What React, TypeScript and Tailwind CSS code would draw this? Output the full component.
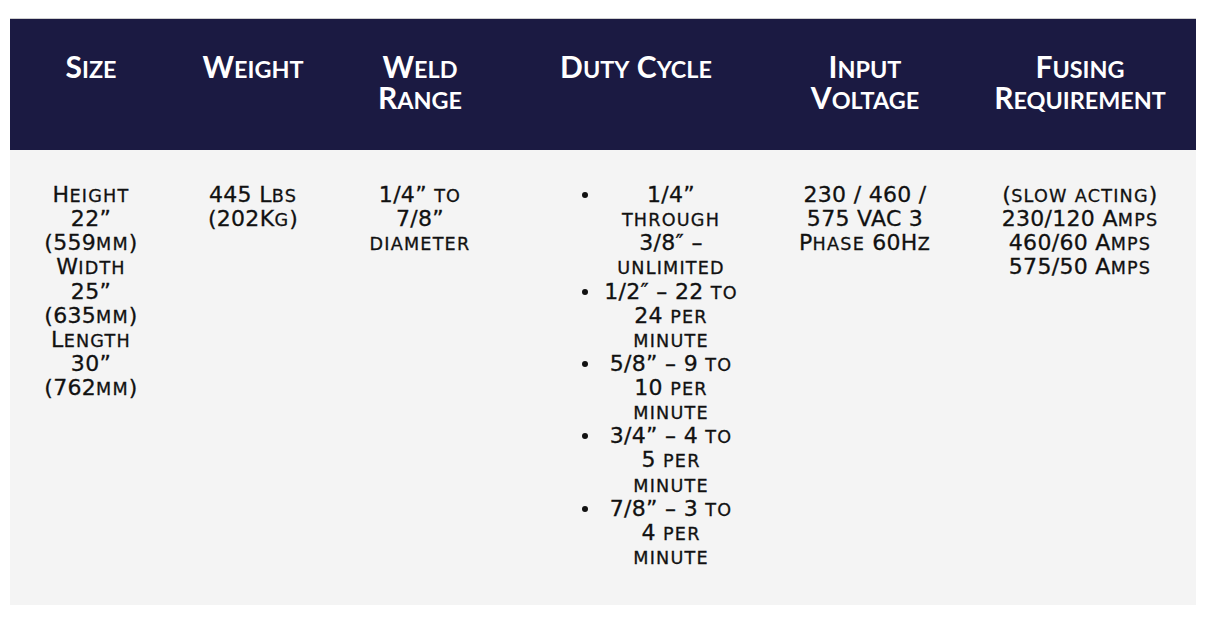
import React from "react";

function SC({ t, r, small }: { t: string; r: string; small?: string }) {
  const parts: { s: string; small: boolean }[] = [];
  for (const ch of t) {
    const sm = ch >= "a" && ch <= "z";
    const last = parts[parts.length - 1];
    if (last && last.small === sm) last.s += ch;
    else parts.push({ s: ch, small: sm });
  }
  return (
    <>
      {parts.map((p, i) =>
        p.small ? (
          <span key={i} className={"uppercase leading-[0] " + (small ?? "")} style={{ fontSize: r }}>
            {p.s}
          </span>
        ) : (
          <span key={i}>{p.s}</span>
        )
      )}
    </>
  );
}

const H = ({ t }: { t: string }) => (
  <div>
    <SC t={t} r="0.78em" />
  </div>
);

const Line = ({ t }: { t: string }) => (
  <div>
    <SC t={t} r="0.8em" small="tracking-[1.2px]" />
  </div>
);

const duty: string[][] = [
  ["1/4”", "through", "3/8″ –", "unlimited"],
  ["1/2″ – 22 to", "24 per", "minute"],
  ["5/8” – 9 to", "10 per", "minute"],
  ["3/4” – 4 to", "5 per", "minute"],
  ["7/8” – 3 to", "4 per", "minute"],
];

export default function App() {
  return (
    <div className="bg-white min-h-[629px] pt-[18px] pl-[10px]">
      <div className="w-[1186px] border-t border-[#cfcfcf]">
        <div className="grid grid-cols-[162px_162px_172px_260px_198px_232px] h-[131px] bg-[#1b1a42] text-white text-center pt-[32px] text-[30px] leading-[31px] font-bold [font-family:Lato,'Open_Sans',sans-serif]">
          <div><H t="Size" /></div>
          <div><H t="Weight" /></div>
          <div><H t="Weld" /><H t="Range" /></div>
          <div><H t="Duty Cycle" /></div>
          <div><H t="Input" /><H t="Voltage" /></div>
          <div><H t="Fusing" /><H t="Requirement" /></div>
        </div>
        <div className="grid grid-cols-[162px_162px_172px_260px_198px_232px] h-[455px] bg-[#f4f4f4] text-[#111111] text-center pt-[33px] text-[22px] leading-[24.13px] tracking-[0.3px] [-webkit-text-stroke:0.3px_#111111] [font-family:'DejaVu_Sans',sans-serif]">
          <div>
            {["Height", "22”", "(559mm)", "Width", "25”", "(635mm)", "Length", "30”", "(762mm)"].map((t, i) => (
              <Line key={i} t={t} />
            ))}
          </div>
          <div>
            <Line t="445 Lbs" />
            <Line t="(202Kg)" />
          </div>
          <div>
            <Line t="1/4” to" />
            <Line t="7/8”" />
            <Line t="diameter" />
          </div>
          <div className="flex flex-col pl-[70px]">
            {duty.map((item, i) => (
              <div key={i} className="flex items-start">
                <div className="w-[18px] h-[24.13px] flex items-center justify-center">
                  <div className="w-[6px] h-[6px] rounded-full bg-[#111111]" />
                </div>
                <div className="w-[154px] text-center whitespace-nowrap">
                  {item.map((t, j) => (
                    <Line key={j} t={t} />
                  ))}
                </div>
              </div>
            ))}
          </div>
          <div>
            <Line t="230 / 460 /" />
            <Line t="575 VAC 3" />
            <Line t="Phase 60Hz" />
          </div>
          <div>
            <Line t="(slow acting)" />
            <Line t="230/120 Amps" />
            <Line t="460/60 Amps" />
            <Line t="575/50 Amps" />
          </div>
        </div>
      </div>
    </div>
  );
}
